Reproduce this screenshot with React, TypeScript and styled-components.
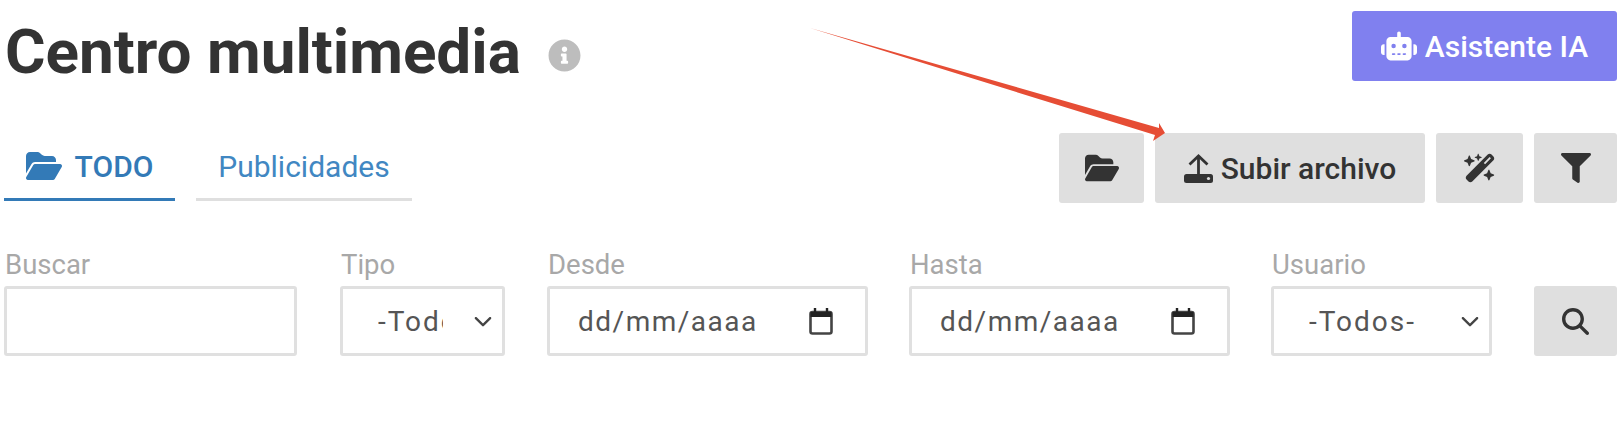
import React from 'react';
import styled, { createGlobalStyle } from 'styled-components';
import { FaFilter, FaInfoCircle } from 'react-icons/fa';
import {
  FaChevronDown,
  FaFolderOpen,
  FaMagnifyingGlass,
  FaRobot,
  FaWandMagicSparkles,
} from 'react-icons/fa6';

const GlobalStyle = createGlobalStyle`
  html, body {
    margin: 0;
    background: #fff;
    font-family: 'Roboto', 'Liberation Sans', sans-serif;
    color: #333;
  }
`;

const Page = styled.div`
  position: relative;
  width: 1623px;
  height: 428px;
  box-sizing: border-box;
  padding: 11px 6px 0 4px;
  overflow: hidden;
`;

const Header = styled.header`
  display: flex;
  justify-content: space-between;
  align-items: flex-start;
  height: 122px;
`;

const TitleGroup = styled.div`
  display: flex;
  align-items: center;
  height: 70px;
  margin-top: 6px;
`;

const Title = styled.h1`
  margin: 0 0 0 1px;
  font-size: 62px;
  font-weight: 700;
  line-height: 1;
`;

const InfoIcon = styled(FaInfoCircle)`
  margin-left: 27px;
  margin-top: 7px;
  font-size: 33px;
  color: #bdbdbd;
`;

const Button = styled.button<{ $w: number; $h?: number; $primary?: boolean }>`
  display: flex;
  align-items: center;
  justify-content: center;
  gap: 8px;
  box-sizing: border-box;
  width: ${({ $w }) => $w}px;
  height: ${({ $h }) => $h ?? 70}px;
  padding: 0;
  border: 0;
  border-radius: 3px;
  background: ${({ $primary }) => ($primary ? '#8080ef' : '#dfdfdf')};
  color: ${({ $primary }) => ($primary ? '#fff' : '#333')};
  font-family: inherit;
  font-size: 30px;
  font-weight: 500;
`;

const Toolbar = styled.div`
  display: flex;
  justify-content: space-between;
  align-items: flex-start;
  height: 118px;
`;

const Tabs = styled.nav`
  display: flex;
  gap: 21px;
`;

const Tab = styled.a<{ $active?: boolean; $w: number }>`
  display: flex;
  align-items: center;
  justify-content: center;
  gap: 13px;
  box-sizing: border-box;
  width: ${({ $w }) => $w}px;
  height: 68px;
  padding-top: 1px;
  border-bottom: 3px solid ${({ $active }) => ($active ? '#337ab7' : '#dfdfdf')};
  color: ${({ $active }) => ($active ? '#337ab7' : '#4187c2')};
  font-size: 30px;
  font-weight: ${({ $active }) => ($active ? 500 : 400)};
`;

const Actions = styled.div`
  display: flex;
  gap: 11px;
`;

const Filters = styled.form`
  display: flex;
  align-items: flex-end;
`;

const Field = styled.label<{ $w: number; $gap: number }>`
  display: flex;
  flex-direction: column;
  width: ${({ $w }) => $w}px;
  margin-right: ${({ $gap }) => $gap}px;
`;

const FieldLabel = styled.span`
  margin-left: 1px;
  margin-bottom: 7px;
  font-size: 27.5px;
  line-height: 28px;
  color: #a8a8a8;
`;

const TextInput = styled.input`
  box-sizing: border-box;
  width: 100%;
  height: 70px;
  border: 3px solid #e0e0e0;
  border-radius: 3px;
  outline: 0;
  background: #fff;
`;

const SelectWrap = styled.div`
  position: relative;
  height: 70px;
`;

const Select = styled.select`
  appearance: none;
  box-sizing: border-box;
  width: 100%;
  height: 70px;
  padding: 0 59px 0 35px;
  border: 3px solid #e0e0e0;
  border-radius: 3px;
  background: #fff;
  color: #555;
  font-family: inherit;
  font-size: 28px;
  letter-spacing: 2px;
`;

const Chevron = styled(FaChevronDown)`
  position: absolute;
  right: 10px;
  top: 25px;
  width: 24px;
  height: 19px;
  color: #444;
  pointer-events: none;
`;

const DateBox = styled.div`
  display: flex;
  align-items: center;
  justify-content: space-between;
  box-sizing: border-box;
  height: 70px;
  padding: 0 32px 0 28px;
  border: 3px solid #e0e0e0;
  border-radius: 3px;
  color: #555;
  font-size: 28px;
  letter-spacing: 1.5px;
`;

const CalendarIcon = styled.svg`
  width: 24px;
  height: 27px;
  fill: none;
`;

const UploadIcon = styled.svg`
  width: 29px;
  height: 29px;
  flex: none;
`;

const Arrow = styled.svg`
  position: absolute;
  left: 0;
  top: 0;
  pointer-events: none;
`;

const DateField = ({ label, gap }: { label: string; gap: number }) => (
  <Field as="div" $w={321} $gap={gap}>
    <FieldLabel>{label}</FieldLabel>
    <DateBox>
      <span>dd/mm/aaaa</span>
      <CalendarIcon viewBox="0 0 24 27">
        <rect x="1.5" y="4" width="21" height="21.5" rx="2" stroke="#444" strokeWidth="2.6" />
        <path d="M1.5 6.5h21" stroke="#222" strokeWidth="5" />
        <path d="M6 0v5M18 0v5" stroke="#222" strokeWidth="2.4" />
      </CalendarIcon>
    </DateBox>
  </Field>
);

const SelectField = ({ label, w, gap }: { label: string; w: number; gap: number }) => (
  <Field $w={w} $gap={gap}>
    <FieldLabel>{label}</FieldLabel>
    <SelectWrap>
      <Select>
        <option>-Todos-</option>
      </Select>
      <Chevron />
    </SelectWrap>
  </Field>
);

export default function App() {
  return (
    <Page>
      <GlobalStyle />
      <Header>
        <TitleGroup>
          <Title>Centro multimedia</Title>
          <InfoIcon />
        </TitleGroup>
        <Button $w={265} $primary>
          <FaRobot size={36} />
          Asistente IA
        </Button>
      </Header>
      <Toolbar>
        <Tabs>
          <Tab $active $w={171}>
            <FaFolderOpen size={36} />
            TODO
          </Tab>
          <Tab $w={216}>Publicidades</Tab>
        </Tabs>
        <Actions>
          <Button $w={85}>
            <FaFolderOpen size={34} />
          </Button>
          <Button $w={270}>
            <UploadIcon viewBox="0 0 29 29">
              <path d="M5.5 10.5 14.5 2l9 8.5M14.5 3v18" fill="none" stroke="#333" strokeWidth="2.8" />
              <rect x="0" y="20" width="29" height="9" rx="2.5" fill="#333" />
              <circle cx="24.5" cy="24.5" r="1.6" fill="#dfdfdf" />
            </UploadIcon>
            Subir archivo
          </Button>
          <Button $w={87}>
            <FaWandMagicSparkles size={32} />
          </Button>
          <Button $w={83}>
            <FaFilter size={30} />
          </Button>
        </Actions>
      </Toolbar>
      <Filters>
        <Field $w={293} $gap={43}>
          <FieldLabel>Buscar</FieldLabel>
          <TextInput />
        </Field>
        <SelectField label="Tipo" w={165} gap={42} />
        <DateField label="Desde" gap={41} />
        <DateField label="Hasta" gap={41} />
        <SelectField label="Usuario" w={221} gap={42} />
        <Button $w={83}>
          <FaMagnifyingGlass size={27} />
        </Button>
      </Filters>
      <Arrow width="1623" height="428" viewBox="0 0 1623 428">
        <path d="M810 28 L1159 128 L1159 123 L1165 133 L1153 141 L1155 135 Z" fill="#e64d35" />
      </Arrow>
    </Page>
  );
}
